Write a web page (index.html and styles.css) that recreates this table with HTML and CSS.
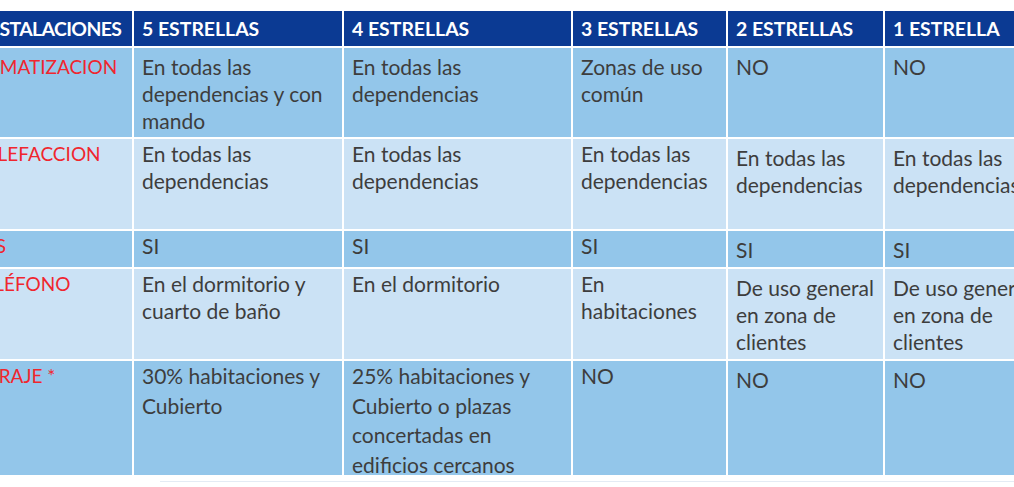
FILE: index.html
```html
<!DOCTYPE html>
<html lang="es">
<head>
<meta charset="utf-8">
<title>Instalaciones por categoría</title>
<link rel="stylesheet" href="styles.css">
</head>
<body>
<div class="page">
  <div class="grid">
    <div class="th first">INSTALACIONES</div>
    <div class="th">5 ESTRELLAS</div>
    <div class="th">4 ESTRELLAS</div>
    <div class="th">3 ESTRELLAS</div>
    <div class="th">2 ESTRELLAS</div>
    <div class="th">1 ESTRELLA</div>

    <div class="td dark r1 label">CLIMATIZACION</div>
    <div class="td dark r1">En todas las<br>dependencias y con<br>mando</div>
    <div class="td dark r1">En todas las<br>dependencias</div>
    <div class="td dark r1">Zonas de uso<br>común</div>
    <div class="td dark r1">NO</div>
    <div class="td dark r1">NO</div>

    <div class="td light rn label">CALEFACCION</div>
    <div class="td light rn">En todas las<br>dependencias</div>
    <div class="td light rn">En todas las<br>dependencias</div>
    <div class="td light rn">En todas las<br>dependencias</div>
    <div class="td light rn lo">En todas las<br>dependencias</div>
    <div class="td light rn lo">En todas las<br>dependencias</div>

    <div class="td dark rn label">TVS</div>
    <div class="td dark rn">SI</div>
    <div class="td dark rn">SI</div>
    <div class="td dark rn">SI</div>
    <div class="td dark rn lo">SI</div>
    <div class="td dark rn lo">SI</div>

    <div class="td light rn label">TELÉFONO</div>
    <div class="td light rn">En el dormitorio y<br>cuarto de baño</div>
    <div class="td light rn">En el dormitorio</div>
    <div class="td light rn">En<br>habitaciones</div>
    <div class="td light rn lo">De uso general<br>en zona de<br>clientes</div>
    <div class="td light rn lo">De uso general<br>en zona de<br>clientes</div>

    <div class="td dark r5 label">GARAJE *</div>
    <div class="td dark r5">30% habitaciones y<br>Cubierto</div>
    <div class="td dark r5">25% habitaciones y<br>Cubierto o plazas<br>concertadas en<br>edificios cercanos</div>
    <div class="td dark r5">NO</div>
    <div class="td dark r5 lo">NO</div>
    <div class="td dark r5 lo">NO</div>
  </div>
  <div class="foot"></div>
</div>
</body>
</html>
```

FILE: styles.css
```css
html, body {
  margin: 0;
  padding: 0;
  background: #ffffff;
  overflow: hidden;
}

.page {
  width: 1014px;
  height: 487px;
  padding-top: 11px;
  box-sizing: border-box;
  overflow: hidden;
  font-family: Lato, "Open Sans", "Liberation Sans", sans-serif;
}

.grid {
  display: grid;
  grid-template-columns: 166px 208px 227px 153px 155px 170px;
  grid-template-rows: 35px 89px 90px 36px 90px 114px;
  gap: 2px;
  margin-left: -34px;
  width: max-content;
  background: #ffffff;
}

.th {
  background: #0b3a93;
  color: #ffffff;
  font-weight: 700;
  font-size: 19.4px;
  display: flex;
  align-items: center;
  padding-left: 8px;
  white-space: nowrap;
  overflow: hidden;
}

.th.first {
  padding-left: 14px;
  letter-spacing: -0.6px;
}

.td {
  color: #3d3d3d;
  font-size: 21px;
  line-height: 27px;
  padding-left: 8px;
  white-space: nowrap;
  overflow: hidden;
  box-sizing: border-box;
}

.dark { background: #93c6ea; }
.light { background: #cbe2f5; }

.label {
  color: #f0262e;
  font-size: 19px;
  padding-left: 6px;
}

.r1 { padding-top: 5px; }
.rn { padding-top: 1px; }
.r5 { padding-top: 0; line-height: 29.5px; }
.rn.lo { padding-top: 5px; }
.r5.lo { padding-top: 4px; }

.foot {
  margin-top: 6px;
  margin-left: 160px;
  border-top: 1px solid #e4ebf4;
}
```
